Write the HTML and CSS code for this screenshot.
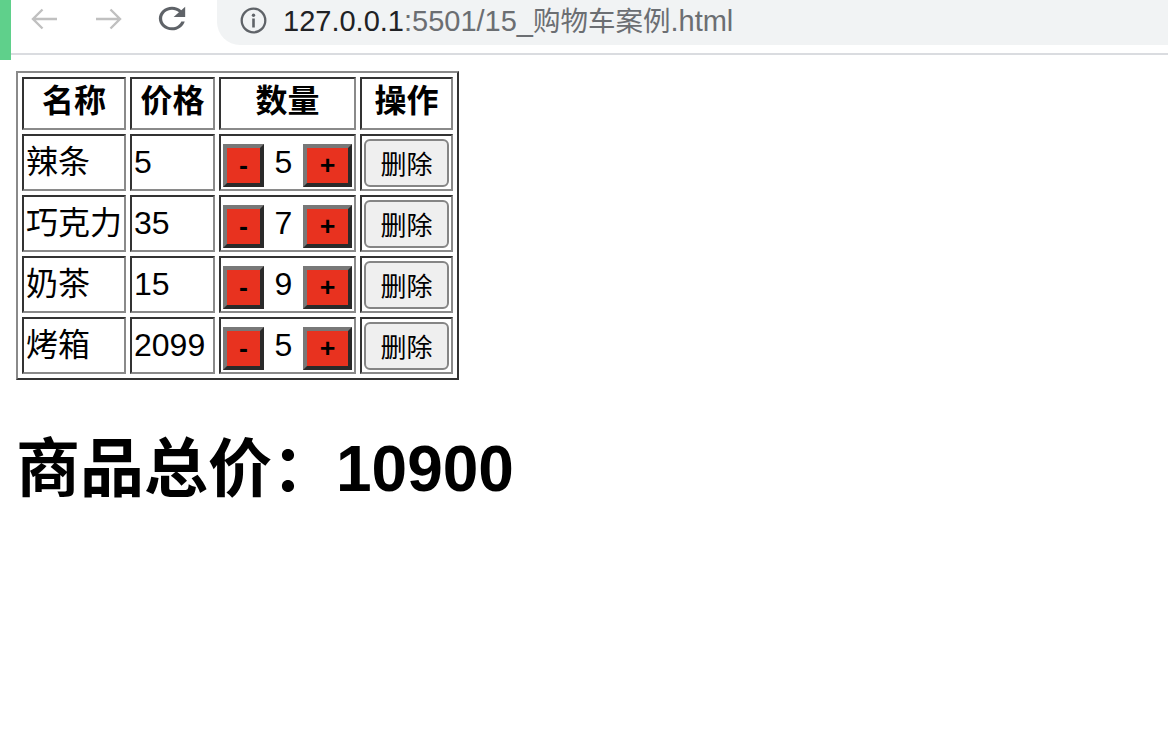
FILE: index.html
```html
<!DOCTYPE html>
<html lang="zh-CN">
<head>
<meta charset="utf-8">
<title>购物车案例</title>
<link rel="stylesheet" href="styles.css">
</head>
<body>
<div class="strip"></div>
<header class="chrome">
  <svg class="nav" viewBox="0 0 28 22" aria-hidden="true"><path d="M27 11H3M12.5 1.5L3 11l9.5 9.5" fill="none" stroke="#c0c0c0" stroke-width="2.4"/></svg>
  <svg class="nav nav-fwd" viewBox="0 0 28 22" aria-hidden="true"><path d="M1 11h24M15.5 1.5L25 11l-9.5 9.5" fill="none" stroke="#c0c0c0" stroke-width="2.4"/></svg>
  <svg class="reload" viewBox="3.5 3.5 17 17" preserveAspectRatio="none" aria-hidden="true"><path fill="#5f6368" d="M17.65 6.35C16.2 4.9 14.21 4 12 4c-4.42 0-7.990 3.58-7.99 8s3.57 8 7.99 8c3.73 0 6.84-2.55 7.73-6h-2.08c-.82 2.33-3.04 4-5.65 4-3.31 0-6-2.69-6-6s2.69-6 6-6c1.66 0 3.14.69 4.22 1.78L13 11h7V4l-2.35 2.35z"/></svg>
  <div class="omnibox">
    <svg class="info" viewBox="0 0 27 27" aria-hidden="true"><circle cx="13.5" cy="13.5" r="11.8" fill="none" stroke="#5f6368" stroke-width="2.3"/><circle cx="13.5" cy="8.2" r="1.7" fill="#5f6368"/><path d="M13.5 11.5v9" stroke="#5f6368" stroke-width="2.6"/></svg>
    <span class="url"><span class="host">127.0.0.1</span><span class="path">:5501/15_<span class="cjk">购物车案例</span>.html</span></span>
  </div>
</header>
<main class="page">
  <table class="cart">
    <thead>
      <tr><th class="c1">名称</th><th class="c2">价格</th><th class="c3">数量</th><th class="c4">操作</th></tr>
    </thead>
    <tbody>
      <tr><td>辣条</td><td>5</td><td><div class="qty"><button class="step step-minus">-</button><span class="num">5</span><button class="step step-plus">+</button></div></td><td><button class="del">删除</button></td></tr>
      <tr><td>巧克力</td><td>35</td><td><div class="qty"><button class="step step-minus">-</button><span class="num">7</span><button class="step step-plus">+</button></div></td><td><button class="del">删除</button></td></tr>
      <tr><td>奶茶</td><td>15</td><td><div class="qty"><button class="step step-minus">-</button><span class="num">9</span><button class="step step-plus">+</button></div></td><td><button class="del">删除</button></td></tr>
      <tr><td>烤箱</td><td>2099</td><td><div class="qty"><button class="step step-minus">-</button><span class="num">5</span><button class="step step-plus">+</button></div></td><td><button class="del">删除</button></td></tr>
    </tbody>
  </table>
  <h1 class="total">商品总价：10900</h1>
</main>
</body>
</html>
```
FILE: styles.css
```css
* { box-sizing: border-box; }
html, body { margin: 0; padding: 0; background: #fff; }
body {
  font-family: "Liberation Sans", "Noto Sans CJK SC", sans-serif;
  color: #000;
  position: relative;
}
.strip {
  position: absolute;
  left: 0;
  top: 0;
  width: 11px;
  height: 60px;
  background: #5fd08b;
}
.chrome {
  height: 55px;
  border-bottom: 2px solid #dadce0;
  display: flex;
  align-items: flex-start;
  padding-left: 30px;
  overflow: hidden;
}
.nav { width: 28px; height: 22px; margin-top: 8px; flex: none; }
.nav-fwd { margin-left: 37px; }
.reload { width: 28px; height: 25px; margin-top: 6px; margin-left: 35px; flex: none; }
.omnibox {
  margin-left: 31px;
  flex: 1;
  height: 45px;
  background: #f1f3f4;
  border-bottom-left-radius: 23px;
  display: flex;
  align-items: center;
  padding: 0 0 5px 23px;
}
.info { width: 27px; height: 27px; flex: none; }
.url {
  margin-left: 16px;
  font-size: 29px;
  line-height: 34px;
  white-space: nowrap;
  color: #6b6e72;
}
.host { color: #202124; }
.cjk { font-size: 27.5px; font-family: "Noto Sans CJK SC", sans-serif; }

.page { padding: 16px; }
.cart {
  border-collapse: separate;
  border-spacing: 4px;
  border: 2px solid;
  border-color: #8a8a8a #333 #333 #8a8a8a;
}
.cart th, .cart td {
  border: 2px solid;
  border-color: #333 #8a8a8a #8a8a8a #333;
  padding: 2px;
  font-size: 32px;
  line-height: 37px;
  vertical-align: middle;
}
.cart th {
  height: 53px;
  font-weight: bold;
  text-align: center;
  padding-bottom: 7px;
}
.cart td { height: 57px; text-align: left; white-space: nowrap; }
.c1 { width: 104px; }
.c2 { width: 85px; }
.c3 { width: 137px; }
.c4 { width: 93px; }

.qty { display: flex; align-items: center; height: 48px; }
.step {
  height: 43px;
  margin-top: 5px;
  padding: 0;
  border: 4px solid;
  border-color: #787878 #2a2a2a #2a2a2a #787878;
  background: #e8321f;
  color: #000;
  font-family: "Liberation Sans", sans-serif;
  font-size: 26.7px;
  font-weight: bold;
  line-height: 30px;
}
.step-minus { width: 41px; }
.step-plus { width: 49px; }
.num { width: 39px; text-align: center; font-size: 32px; }
.del {
  display: block;
  width: 85px;
  height: 48px;
  padding: 0;
  background: #efefef;
  border: 2px solid #858585;
  border-radius: 6px;
  color: #000;
  font-family: "Liberation Sans", "Noto Sans CJK SC", sans-serif;
  font-size: 26px;
}
.total {
  margin: 52px 0 0;
  font-size: 64px;
  font-weight: bold;
  line-height: 74px;
}
```
